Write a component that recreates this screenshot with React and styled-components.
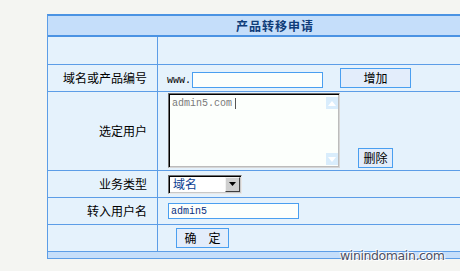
import styled, { createGlobalStyle } from 'styled-components';

const GlobalStyle = createGlobalStyle`
  html, body {
    margin: 0;
    padding: 0;
    background: #f4f5f2;
    overflow: hidden;
  }
  body {
    font-family: "Noto Sans CJK SC", "Liberation Sans", sans-serif;
    font-size: 12px;
    color: #000;
  }
`;

const Page = styled.div`
  position: relative;
  width: 460px;
  height: 271px;
  padding: 14px 0 0 47px;
  box-sizing: border-box;
  overflow: hidden;
`;

const Panel = styled.div`
  width: 454px;
  border: 1px solid #5c9de7;
  border-top: 2px solid #4b93e3;
  background: #e5f2fc;
`;

const Header = styled.div`
  height: 19px;
  border-bottom: 2px solid #4b93e3;
  background: #c5defa;
  display: flex;
  align-items: center;
  justify-content: center;
  color: #0f3c78;
  font-weight: bold;
  letter-spacing: 1px;
  line-height: 14px;
`;

const Row = styled.div`
  display: flex;
  height: ${(p) => p.$h}px;
  border-bottom: 1px solid #5c9de7;
`;

const Label = styled.div`
  width: 110px;
  flex: none;
  border-right: 1px solid #5c9de7;
  padding-right: 10px;
  box-sizing: border-box;
  display: flex;
  align-items: center;
  justify-content: flex-end;
  line-height: 14px;
`;

const Value = styled.div`
  flex: 1;
  display: flex;
  align-items: ${(p) => (p.$bottom ? 'flex-end' : 'center')};
  padding: 0 0 ${(p) => p.$pb || 0}px 10px;
`;

const Footer = styled.div`
  height: 6px;
  background: #c5defa;
`;

const Prefix = styled.span`
  font-family: "Liberation Mono", monospace;
  font-size: 10px;
  line-height: 12px;
  margin: 0 1px 1px -1px;
  color: #000;
`;

const TextInput = styled.input`
  width: ${(p) => p.$w}px;
  height: 16px;
  box-sizing: border-box;
  border: 1px solid #4a9ff0;
  background: #fcfffc;
  padding: 0 2px;
  margin: 0;
  font-family: "Liberation Mono", monospace;
  font-size: 10px;
  color: #0a2f80;
  outline: none;
`;

const Button = styled.button`
  width: ${(p) => p.$w}px;
  height: 20px;
  margin: 0 0 0 ${(p) => p.$ml || 0}px;
  padding: 0;
  box-sizing: border-box;
  border: 1px solid #4a9ff0;
  background: #e3edfb;
  font-family: "Noto Sans CJK SC", sans-serif;
  font-size: 12px;
  line-height: 14px;
  color: #000;
`;

const Memo = styled.div`
  width: 172px;
  height: 75px;
  box-sizing: border-box;
  display: flex;
  padding: 2px 1px 1px 2px;
  border: 1px solid;
  border-color: #707070 #d6d6d6 #d6d6d6 #707070;
  box-shadow: inset 1px 1px 0 #000, inset -1px -1px 0 #bcbcbc;
  background: #fcfffc;
`;

const MemoText = styled.div`
  flex: 1;
  display: flex;
  align-items: flex-start;
  padding: 2px 0 0 1px;
  font-family: "Liberation Mono", monospace;
  font-size: 10px;
  line-height: 12px;
  color: #7a7a7a;
`;

const Caret = styled.span`
  width: 1px;
  height: 11px;
  margin: 0 0 0 3px;
  background: #555;
`;

const ScrollCol = styled.div`
  width: 12px;
  display: flex;
  flex-direction: column;
  justify-content: space-between;
  padding: 1px 0;
`;

const ScrollBox = styled.div`
  width: 12px;
  height: 12px;
  background: #d9edfc;
  display: flex;
  align-items: center;
  justify-content: center;
`;

const Select = styled.div`
  width: 74px;
  height: 19px;
  box-sizing: border-box;
  display: flex;
  align-items: center;
  padding: 1px;
  border: 1px solid;
  border-color: #707070 #e8e8e8 #e8e8e8 #707070;
  box-shadow: inset 1px 1px 0 #000, inset -1px -1px 0 #c8c8c8;
  background: #fff;
`;

const SelectText = styled.span`
  flex: 1;
  padding-left: 3px;
  color: #0a3d91;
  line-height: 14px;
`;

const SelectArrow = styled.span`
  width: 15px;
  height: 15px;
  box-sizing: border-box;
  display: flex;
  align-items: center;
  justify-content: center;
  background: #cfcfcf;
  border: 1px solid;
  border-color: #f2f2f2 #404040 #404040 #f2f2f2;
`;

const Watermark = styled.div`
  position: absolute;
  left: 340px;
  top: 248px;
  font-family: "DejaVu Sans", sans-serif;
  font-size: 12.5px;
  letter-spacing: -0.4px;
  line-height: 15px;
  color: #4d5064;
  text-shadow: 0 0 2px #fff, 1px 1px 0 #fff, -1px -1px 0 #fff;
`;

function Arrow({ up }) {
  return (
    <svg width="8" height="5" viewBox="0 0 8 5">
      <polygon points={up ? '0,5 8,5 4,0' : '0,0 8,0 4,5'} fill="#fff" />
    </svg>
  );
}

export default function App() {
  return (
    <Page>
      <GlobalStyle />
      <Panel>
        <Header>产品转移申请</Header>
        <Row $h={27}>
          <Label />
          <Value />
        </Row>
        <Row $h={26}>
          <Label>域名或产品编号</Label>
          <Value $bottom $pb={3}>
            <Prefix>www.</Prefix>
            <TextInput $w={131} readOnly />
            <Button $w={71} $ml={17}>增加</Button>
          </Value>
        </Row>
        <Row $h={78}>
          <Label>选定用户</Label>
          <Value $bottom $pb={2}>
            <Memo>
              <MemoText>
                admin5.com
                <Caret />
              </MemoText>
              <ScrollCol>
                <ScrollBox>
                  <Arrow up />
                </ScrollBox>
                <ScrollBox>
                  <Arrow />
                </ScrollBox>
              </ScrollCol>
            </Memo>
            <Button $w={35} $ml={18}>删除</Button>
          </Value>
        </Row>
        <Row $h={26}>
          <Label>业务类型</Label>
          <Value>
            <Select>
              <SelectText>域名</SelectText>
              <SelectArrow>
                <svg width="7" height="4" viewBox="0 0 7 4">
                  <polygon points="0,0 7,0 3.5,4" fill="#000" />
                </svg>
              </SelectArrow>
            </Select>
          </Value>
        </Row>
        <Row $h={26}>
          <Label>转入用户名</Label>
          <Value>
            <TextInput $w={131} defaultValue="admin5" readOnly />
          </Value>
        </Row>
        <Row $h={26}>
          <Label />
          <Value>
            <Button $w={53} $ml={8}>确　定</Button>
          </Value>
        </Row>
        <Footer />
      </Panel>
      <Watermark>winindomain.com</Watermark>
    </Page>
  );
}
